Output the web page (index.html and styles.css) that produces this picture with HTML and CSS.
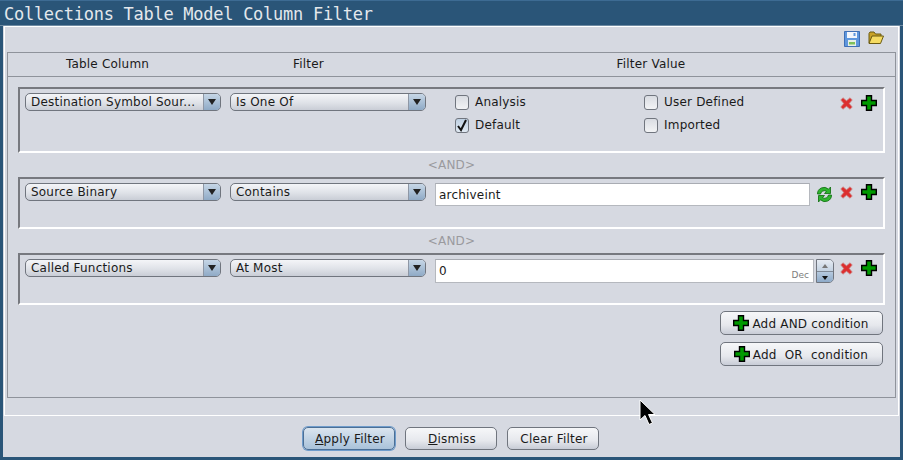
FILE: index.html
```html
<!DOCTYPE html>
<html lang="en">
<head>
  <meta charset="UTF-8" />
  <title>Collections Table Model Column Filter</title>
  <link rel="stylesheet" href="styles.css">
</head>
<body>

  <svg class="defs" width="0" height="0">
    <symbol id="plus" viewBox="0 0 16 16">
      <path d="M5.5 .7h5v4.800h4.800v5h-4.800v4.800h-5v-4.800H.7v-5h4.800z" fill="#009a00" stroke="#000" stroke-width="1.4"/>
    </symbol>
    <symbol id="cross" viewBox="0 0 14 14">
      <path d="M.8 3.200L3.200 .8 7 4l3.800-3.200 2.400 2.400L10 7l3.200 3.800-2.400 2.400L7 10l-3.800 3.200-2.400-2.400L4 7z" fill="#dc2f2f" stroke="#c99090" stroke-width=".8"/>
    </symbol>
  </svg>

  <div class="window">
    <div class="titlebar">Collections Table Model Column Filter</div>

    <div class="content">
      <div class="etched">
        <div class="toolbar">
          <svg class="tool" width="16" height="16" viewBox="0 0 16 16">
            <path d="M.5 .5h15v15H.5z" fill="#5f97dd" stroke="#3f6fb5"/>
            <path d="M3 1h10v6H3z" fill="#f3f6fb"/>
            <path d="M4 9h8v6H4z" fill="#e8efe6"/>
            <path d="M5 11h6v2.500H5z" fill="#7fc05a"/>
            <path d="M9.500 2h2v3h-2z" fill="#5f97dd"/>
          </svg>
          <svg class="tool" width="16" height="14" viewBox="0 0 16 14">
            <path d="M1 12V2.500L2 1h4l1.500 2H13v2" fill="#c9a227" stroke="#6b5a12"/>
            <path d="M1 12.500L4 5h11.500L12.500 12.500z" fill="#f5db62" stroke="#6b5a12"/>
          </svg>
        </div>

        <div class="table-box">
          <div class="table-head">
            <span class="col-column">Table Column</span>
            <span class="col-filter">Filter</span>
            <span class="col-value">Filter Value</span>
          </div>

          <div class="table-body">
            <div class="row row-tall">
              <div class="combo"><span class="combo-text">Destination Symbol Sour...</span><span class="combo-arrow"></span></div>
              <div class="combo"><span class="combo-text">Is One Of</span><span class="combo-arrow"></span></div>
              <div class="checks">
                <label class="check"><span class="box"></span>Analysis</label>
                <label class="check"><span class="box"></span>User Defined</label>
                <label class="check"><span class="box box-on">
                  <svg width="12" height="13" viewBox="0 0 12 13"><path d="M2 7l3 4 5-10" fill="none" stroke="#111" stroke-width="2"/></svg>
                </span>Default</label>
                <label class="check"><span class="box"></span>Imported</label>
              </div>
              <div class="actions">
                <svg class="icon-x" width="13" height="13"><use href="#cross"/></svg>
                <svg class="icon-plus" width="16" height="16"><use href="#plus"/></svg>
              </div>
            </div>

            <div class="and">&lt;AND&gt;</div>

            <div class="row">
              <div class="combo"><span class="combo-text">Source Binary</span><span class="combo-arrow"></span></div>
              <div class="combo"><span class="combo-text">Contains</span><span class="combo-arrow"></span></div>
              <div class="field">archiveint</div>
              <svg class="refresh" width="17" height="17" viewBox="0 0 17 17">
                <path d="M1.500 8a6.500 6.500 0 0 1 11-4.800L14.500 1v6.500H8.500l2-2.200A4 4 0 0 0 4.500 8z" fill="#2fb52f" stroke="#0d6b0d" stroke-width=".8"/>
                <path d="M15.500 9a6.500 6.500 0 0 1-11 4.800L2.500 16V9.500h6l-2 2.200a4 4 0 0 0 6-2.700z" fill="#2fb52f" stroke="#0d6b0d" stroke-width=".8"/>
              </svg>
              <div class="actions">
                <svg class="icon-x" width="13" height="13"><use href="#cross"/></svg>
                <svg class="icon-plus" width="16" height="16"><use href="#plus"/></svg>
              </div>
            </div>

            <div class="and">&lt;AND&gt;</div>

            <div class="row">
              <div class="combo"><span class="combo-text">Called Functions</span><span class="combo-arrow"></span></div>
              <div class="combo"><span class="combo-text">At Most</span><span class="combo-arrow"></span></div>
              <div class="field field-num">0<span class="radix">Dec</span></div>
              <div class="spinner">
                <span class="spin-up"></span>
                <span class="spin-down"></span>
              </div>
              <div class="actions">
                <svg class="icon-x" width="13" height="13"><use href="#cross"/></svg>
                <svg class="icon-plus" width="16" height="16"><use href="#plus"/></svg>
              </div>
            </div>

            <div class="add-buttons">
              <button class="btn btn-add"><svg width="16" height="16"><use href="#plus"/></svg>Add AND condition</button>
              <button class="btn btn-add btn-or"><svg width="16" height="16"><use href="#plus"/></svg>Add&nbsp; OR &nbsp;condition</button>
            </div>
          </div>
        </div>
      </div>

      <div class="footer">
        <button class="btn btn-main btn-default"><u>A</u>pply Filter</button>
        <button class="btn btn-main"><u>D</u>ismiss</button>
        <button class="btn btn-main">Clear Filter</button>
      </div>
    </div>
  </div>

  <svg class="cursor" width="18" height="28" viewBox="0 0 18 28">
    <path d="M1 1v20l5-4.500 4 9 3.500-1.500-4-8.500H16z" fill="#000" stroke="#fff" stroke-width="1"/>
  </svg>

</body>
</html>
```

FILE: styles.css
```css
* {
  box-sizing: border-box;
}

body {
  margin: 0;
  width: 903px;
  height: 460px;
  overflow: hidden;
  position: relative;
  background-color: #2a5578;
  font-family: 'DejaVu Sans', sans-serif;
  font-size: 12px;
  letter-spacing: .2px;
  color: #1a1a1a;
}

.defs {
  display: block;
  height: 0;
}

.window {
  height: 460px;
  display: flex;
  flex-direction: column;
}

.titlebar {
  height: 26px;
  flex: none;
  padding: 3px 0 0 4px;
  font-family: 'DejaVu Sans Mono', monospace;
  font-size: 17px;
  letter-spacing: -.27px;
  line-height: 20px;
  color: #e4e8ec;
  border-top: 1px solid #3d6b93;
  border-bottom: 1px solid #6f8ba3;
}

.content {
  margin: 0 3px 3px;
  flex: 1;
  background-color: #d6d9e1;
  display: flex;
  flex-direction: column;
}

.etched {
  height: 390px;
  margin-left: 1px;
  margin-right: 1px;
  border: 1px solid #fff;
  padding: 0 2px 0 2px;
  display: flex;
  flex-direction: column;
}

.toolbar {
  height: 25px;
  flex: none;
  display: flex;
  justify-content: flex-end;
  align-items: flex-start;
  gap: 8px;
  padding: 4px 12px 0 0;
}

.table-box {
  height: 346px;
  flex: none;
  border: 1px solid #8f939b;
}

.table-head {
  height: 24px;
  border-bottom: 1px solid #8f939b;
  display: grid;
  grid-template-columns: 199px 203px 1fr;
  padding-right: 3px;
  line-height: 23px;
  text-align: center;
}

.table-body {
  padding: 10px 10px 0 10px;
}

.row {
  height: 52px;
  display: flex;
  align-items: flex-start;
  padding: 4px 0 0 5px;
  border-top: 2px solid #77797f;
  border-left: 2px solid #77797f;
  border-right: 2px solid #fff;
  border-bottom: 2px solid #fff;
}

.row-tall {
  height: 66px;
}

.combo {
  width: 196px;
  height: 18px;
  flex: none;
  margin-right: 9px;
  display: flex;
  border: 1px solid #70757e;
  border-radius: 5px;
  background: linear-gradient(#f4f5f8, #dfe2e8 55%, #c9cdd6);
  overflow: hidden;
}

.combo-text {
  flex: 1;
  padding-left: 5px;
  line-height: 17px;
  white-space: nowrap;
}

.combo-arrow {
  width: 17px;
  position: relative;
  border-left: 1px solid #8e97a5;
  background: linear-gradient(#c6d6e6, #8faac6);
}

.combo-arrow::after {
  content: "";
  position: absolute;
  left: 4px;
  top: 5px;
  border-left: 4px solid transparent;
  border-right: 4px solid transparent;
  border-top: 6px solid #222;
}

.checks {
  width: 378px;
  flex: none;
  margin: 1px 0 0 20px;
  display: grid;
  grid-template-columns: 189px 189px;
  grid-auto-rows: 23px;
}

.check {
  display: flex;
  align-items: center;
  height: 16px;
  gap: 6px;
}

.box {
  width: 14px;
  height: 15px;
  border: 1px solid #70757e;
  border-radius: 3px;
  background: linear-gradient(#d9dce2, #f2f3f5);
}

.box-on {
  background: linear-gradient(#bfd0e2, #dfe8f1);
}

.box-on svg {
  display: block;
}

.actions {
  margin-left: auto;
  margin-right: 6px;
  margin-top: 1px;
  display: flex;
  align-items: flex-start;
  gap: 8px;
}

.row-tall .actions {
  margin-top: 2px;
}

.actions .icon-x {
  margin-top: 2px;
}

.field {
  width: 375px;
  height: 23px;
  flex: none;
  margin-right: 6px;
  padding-left: 3px;
  background-color: #fff;
  border: 1px solid #b5b8be;
  border-top-color: #a9acb3;
  line-height: 22px;
  position: relative;
}

.field-num {
  width: 379px;
  height: 24px;
  margin-right: 2px;
}

.radix {
  position: absolute;
  right: 4px;
  bottom: 1px;
  font-size: 9px;
  letter-spacing: 0;
  line-height: 11px;
  color: #7c7c7c;
}

.refresh {
  margin-top: 3px;
  flex: none;
}

.spinner {
  width: 18px;
  height: 24px;
  flex: none;
  display: flex;
  flex-direction: column;
  border: 1px solid #70757e;
  border-radius: 0 5px 5px 0;
  overflow: hidden;
}

.spin-up, .spin-down {
  flex: 1;
  position: relative;
}

.spin-up {
  background: linear-gradient(#e6ebf2, #c3d2e2);
  border-bottom: 1px solid #7f8996;
}

.spin-down {
  background: linear-gradient(#b6cadf, #8daac8);
}

.spin-up::after, .spin-down::after {
  content: "";
  position: absolute;
  left: 5px;
  border-left: 3px solid transparent;
  border-right: 3px solid transparent;
}

.spin-up::after {
  top: 4px;
  border-bottom: 4px solid #777;
}

.spin-down::after {
  top: 4px;
  border-top: 4px solid #111;
}

.and {
  height: 24px;
  line-height: 24px;
  text-align: center;
  color: #9a9a9e;
}

.add-buttons {
  display: flex;
  flex-direction: column;
  align-items: flex-end;
  gap: 7px;
  padding: 6px 2px 0 0;
}

.btn {
  font-family: 'DejaVu Sans', sans-serif;
  font-size: 12px;
  letter-spacing: .2px;
  color: #1a1a1a;
  border: 1px solid #70757e;
  border-radius: 5px;
  background: linear-gradient(#f6f7f9, #e6e8ed 60%, #c8ccd6);
  padding: 0;
}

.btn-add {
  width: 163px;
  height: 24px;
  display: flex;
  align-items: center;
  justify-content: center;
  gap: 3px;
  padding: 1px 1px 0 0;
}

.btn-add svg {
  margin-top: -1px;
}

.footer {
  flex: 1;
  display: flex;
  justify-content: center;
  gap: 10px;
  padding: 11px 2px 0 0;
}

.btn-main {
  width: 92px;
  height: 23px;
  padding-left: 3px;
}

.btn-default {
  background: linear-gradient(#dbe5ef, #a9c2da);
  border-color: #4b6f96;
  box-shadow: 0 0 0 1px #6f9ccb;
}

.cursor {
  position: absolute;
  left: 639px;
  top: 399px;
}
```
